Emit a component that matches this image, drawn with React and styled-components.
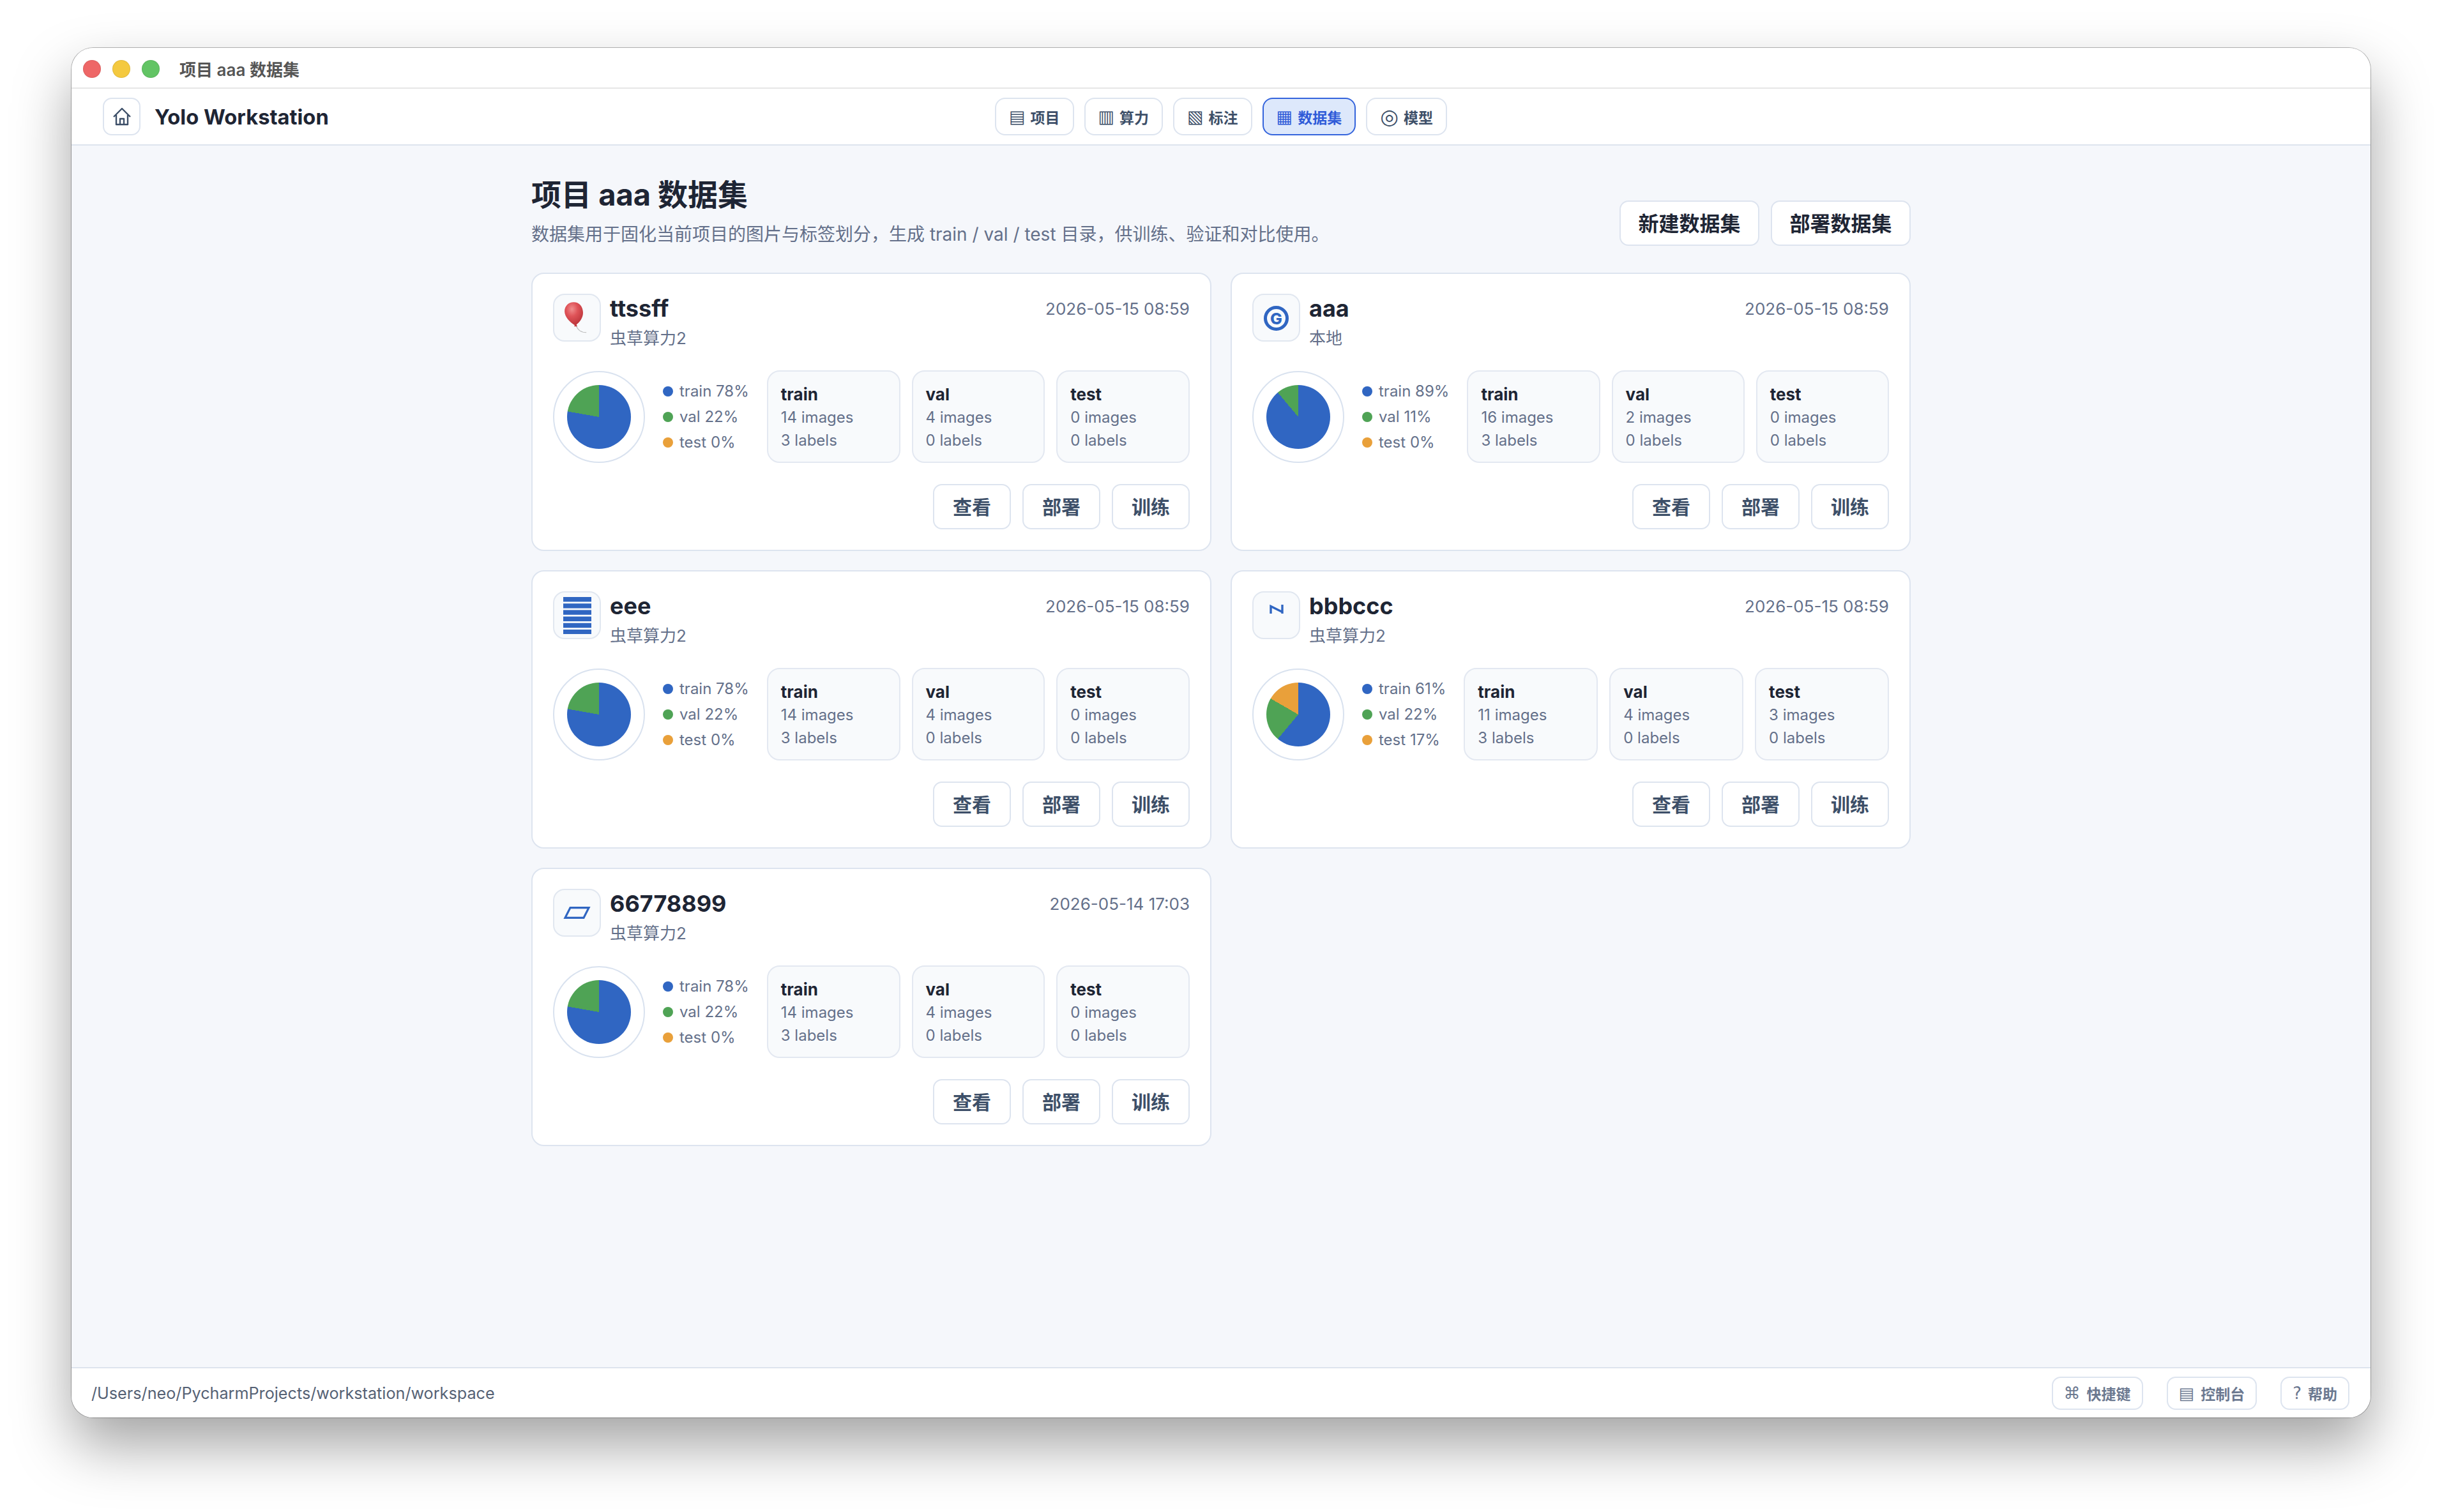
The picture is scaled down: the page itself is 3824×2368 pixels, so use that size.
import React from 'react'
import styled, { createGlobalStyle } from 'styled-components'

const FONT = `Inter, 'Noto Sans CJK SC', 'DejaVu Sans', sans-serif`
const BLUE = '#3066c2'
const GREEN = '#4fa355'
const ORANGE = '#e9a03a'

const GlobalStyle = createGlobalStyle`
  html, body {
    margin: 0;
    background: #fff;
  }
  body {
    font-family: ${FONT};
    -webkit-font-smoothing: antialiased;
  }
  * {
    box-sizing: border-box;
  }
`

const Stage = styled.div`
  width: 3824px;
  height: 2368px;
  padding: 75px 112px 148px;
  overflow: hidden;
`

const Window = styled.div`
  display: flex;
  flex-direction: column;
  height: 100%;
  border-radius: 34px;
  overflow: hidden;
  background: #f5f7fb;
  box-shadow: 0 0 0 1px rgba(0, 0, 0, 0.28), 0 44px 90px rgba(0, 0, 0, 0.36);
`

const TitleBar = styled.div`
  display: flex;
  align-items: center;
  height: 64px;
  padding: 3px 0 0 18px;
  background: #fff;
  border-bottom: 2px solid #e6e6e6;
`

const Light = styled.span`
  width: 28px;
  height: 28px;
  margin-right: 18px;
  border-radius: 50%;
  background: ${(p) => p.$color};
  border: 1px solid rgba(0, 0, 0, 0.08);
`

const WindowTitle = styled.span`
  margin-left: 13px;
  font-size: 26px;
  font-weight: 600;
  color: #555;
`

const Header = styled.header`
  display: grid;
  grid-template-columns: 1fr auto 1fr;
  align-items: center;
  height: 89px;
  padding: 0 49px;
  background: #fff;
  border-bottom: 2px solid #dde4ee;
`

const Brand = styled.div`
  display: flex;
  align-items: center;
  gap: 22px;
`

const HomeButton = styled.div`
  display: flex;
  align-items: center;
  justify-content: center;
  width: 59px;
  height: 59px;
  border: 2px solid #dde4ef;
  border-radius: 14px;
  color: #3d4f68;
`

const BrandName = styled.span`
  font-size: 32.7px;
  font-weight: 700;
  color: #1e2534;
`

const Nav = styled.nav`
  display: flex;
  gap: 16px;
`

const NavItem = styled.div`
  display: flex;
  align-items: center;
  gap: 8px;
  height: 59px;
  padding: 0 20px;
  border: 2px solid ${(p) => (p.$active ? '#3464dc' : '#dde4ef')};
  border-radius: 16px;
  background: ${(p) => (p.$active ? '#dde8fb' : '#fff')};
  color: ${(p) => (p.$active ? '#2f5bd8' : '#3d4f68')};
  font-size: 23px;
  font-weight: 600;
`

const Glyph = styled.span`
  font-family: 'DejaVu Sans', sans-serif;
  font-weight: 400;
  font-size: ${(p) => p.$size || 27}px;
  line-height: 1;
`

const Main = styled.main`
  flex: 1;
  width: 2160px;
  margin: 0 auto;
  padding-top: 47px;
`

const PageHead = styled.div`
  display: flex;
  align-items: flex-end;
  justify-content: space-between;
  margin-bottom: 42px;
`

const PageTitle = styled.h1`
  margin: 0 0 14px;
  font-size: 47px;
  line-height: 60px;
  font-weight: 700;
  color: #1e2534;
`

const PageSub = styled.p`
  margin: 0;
  font-size: 28px;
  line-height: 36px;
  color: #64708a;
`

const HeadActions = styled.div`
  display: flex;
  gap: 18px;
`

const Button = styled.div`
  display: flex;
  align-items: center;
  justify-content: center;
  height: 71px;
  padding: 0 ${(p) => (p.$primary ? 27.5 : 29)}px 3px;
  border: 2px solid #dde4ef;
  border-radius: 14px;
  background: #fff;
  color: ${(p) => (p.$primary ? '#1e2534' : '#3d4f68')};
  font-size: ${(p) => (p.$primary ? 32 : 30)}px;
  font-weight: 700;
`

const CardGrid = styled.div`
  display: grid;
  grid-template-columns: repeat(2, 1fr);
  gap: 30px;
`

const Card = styled.article`
  height: 436px;
  padding: 31px 32px 32px;
  border: 2px solid #dde4ef;
  border-radius: 20px;
  background: #fff;
`

const CardTop = styled.div`
  display: flex;
  justify-content: space-between;
  align-items: flex-start;
  height: 120px;
`

const CardIdentity = styled.div`
  display: flex;
  gap: 14px;
`

const IconBox = styled.div`
  display: flex;
  align-items: center;
  justify-content: center;
  width: 75px;
  height: 75px;
  border: 2px solid #e1e7f0;
  border-radius: 18px;
  background: #f8fafc;
  color: ${BLUE};
  overflow: hidden;
`

const NIconBox = styled(IconBox)`
  align-items: flex-start;
  padding-top: 19px;
`

const CardName = styled.div`
  margin-top: 2px;
  font-size: 36px;
  line-height: 42px;
  font-weight: 700;
  color: #1e2534;
`

const CardSub = styled.div`
  margin-top: 8px;
  font-size: 26px;
  line-height: 36px;
  color: #64708a;
`

const CardDate = styled.div`
  margin-top: 6px;
  font-size: 26px;
  line-height: 36px;
  color: #64708a;
`

const CardBody = styled.div`
  display: flex;
  align-items: center;
  gap: 28px;
  height: 145px;
`

const PieRing = styled.div`
  display: flex;
  align-items: center;
  justify-content: center;
  flex: none;
  width: 144px;
  height: 144px;
  border: 2px solid #d9e2ef;
  border-radius: 50%;
  background: #fff;
`

const PieDisc = styled.div`
  width: 100px;
  height: 100px;
  border-radius: 50%;
`

const Legend = styled.div`
  display: flex;
  flex-direction: column;
  flex: none;
  margin-top: 1px;
`

const LegendRow = styled.div`
  display: flex;
  align-items: center;
  gap: 10px;
  font-size: 24px;
  line-height: 40px;
  color: #64708a;
`

const Dot = styled.span`
  width: 16px;
  height: 16px;
  border-radius: 50%;
  background: ${(p) => p.$color};
`

const Stats = styled.div`
  display: grid;
  grid-template-columns: repeat(3, 1fr);
  gap: 18px;
  flex: 1;
`

const StatBox = styled.div`
  height: 145px;
  padding: 17px 20px 0;
  border: 2px solid #e3e8f1;
  border-radius: 20px;
  background: #f8fafc;
  font-size: 24px;
  line-height: 36px;
  color: #64708a;
`

const StatName = styled.div`
  font-size: 26px;
  line-height: 37px;
  font-weight: 700;
  color: #1e2534;
`

const CardActions = styled.div`
  display: flex;
  justify-content: flex-end;
  gap: 18px;
  margin-top: 33px;
`

const Footer = styled.footer`
  display: flex;
  align-items: center;
  justify-content: space-between;
  height: 79px;
  padding: 0 33px 0 31px;
  background: #fff;
  border-top: 2px solid #dde4ee;
`

const FooterPath = styled.span`
  font-size: 25.2px;
  color: #566275;
`

const FooterActions = styled.div`
  display: flex;
  gap: 37px;
`

const FooterButton = styled.div`
  display: flex;
  align-items: center;
  gap: 10px;
  height: 52px;
  padding: 0 17px;
  border: 2px solid #dde4ef;
  border-radius: 14px;
  color: #6b7890;
  font-size: 23px;
  font-weight: 600;
`

const RingG = styled.span`
  display: flex;
  align-items: center;
  justify-content: center;
  width: 39px;
  height: 39px;
  margin-top: 2px;
  border: 5px solid ${BLUE};
  border-radius: 50%;
  font-size: 25px;
  font-weight: 800;
`

const HomeIcon = () => (
  <svg width="30" height="30" viewBox="0 0 30 30" fill="none" stroke="currentColor" strokeWidth="2.4" strokeLinejoin="round">
    <path d="M2 15 15 2l13 13" />
    <path d="M6 12v15h18V12" />
    <path d="M12 27v-9h6v9" />
  </svg>
)

const BalloonIcon = () => (
  <svg width="75" height="75" viewBox="0 0 75 75" fill="none">
    <defs>
      <radialGradient id="balloon" cx="0.4" cy="0.3" r="0.7">
        <stop offset="0" stopColor="#f08e8e" />
        <stop offset="0.45" stopColor="#df5358" />
        <stop offset="1" stopColor="#bd363c" />
      </radialGradient>
    </defs>
    <path d="M35 49c2 4 3 7 7 10 3 2 7 3 11 3" stroke="#b8b8b8" strokeWidth="1.2" />
    <path d="M32 12c-8.500 0-15 6.500-15 15 0 9.500 9 18 16 22.500 1 .5 2 .5 3 0 6.500-5 12-12.500 11.500-21C47 18.500 41 12 32 12Z" fill="url(#balloon)" />
    <path d="M33 52h5l-1.500-3.500h-2.500Z" fill="#c23d42" />
  </svg>
)

const HexagramIcon = () => (
  <svg width="44" height="58" viewBox="0 0 44 58" fill={BLUE}>
    {[0, 10.2, 20.4, 30.6, 40.8, 51].map((y) => (
      <rect key={y} x="0" y={y} width="44" height="7.400" />
    ))}
  </svg>
)

const WideNIcon = () => (
  <svg width="22" height="14" viewBox="0 0 22 14" fill="none" stroke={BLUE} strokeWidth="3.400">
    <path d="M2 14V2.500L20 11.500M20 0v14" />
  </svg>
)

const ParallelogramIcon = () => (
  <svg width="43" height="19" viewBox="0 0 43 19" fill="none" stroke={BLUE} strokeWidth="3.200">
    <path d="M11 1.600h29L32 17.400H3Z" />
  </svg>
)

const cardIcons = {
  balloon: <BalloonIcon />,
  ring: <RingG>G</RingG>,
  hexagram: <HexagramIcon />,
  wideN: <WideNIcon />,
  parallelogram: <ParallelogramIcon />,
}

const navItems = [
  { glyph: '▤', label: '项目' },
  { glyph: '▥', label: '算力' },
  { glyph: '▧', label: '标注' },
  { glyph: '▦', label: '数据集', active: true },
  { glyph: '◎', label: '模型', size: 33 },
]

const datasets = [
  { name: 'ttssff', icon: 'balloon', host: '虫草算力2', date: '2026-05-15 08:59', train: [14, 3], val: [4, 0], test: [0, 0], pct: [78, 22, 0] },
  { name: 'aaa', icon: 'ring', host: '本地', date: '2026-05-15 08:59', train: [16, 3], val: [2, 0], test: [0, 0], pct: [89, 11, 0] },
  { name: 'eee', icon: 'hexagram', host: '虫草算力2', date: '2026-05-15 08:59', train: [14, 3], val: [4, 0], test: [0, 0], pct: [78, 22, 0] },
  { name: 'bbbccc', icon: 'wideN', host: '虫草算力2', date: '2026-05-15 08:59', train: [11, 3], val: [4, 0], test: [3, 0], pct: [61, 22, 17] },
  { name: '66778899', icon: 'parallelogram', host: '虫草算力2', date: '2026-05-14 17:03', train: [14, 3], val: [4, 0], test: [0, 0], pct: [78, 22, 0] },
]

const pieFill = (d) => {
  const total = d.train[0] + d.val[0] + d.test[0]
  const a = (d.train[0] / total) * 360
  const b = a + (d.val[0] / total) * 360
  return `conic-gradient(${BLUE} 0 ${a}deg, ${GREEN} ${a}deg ${b}deg, ${ORANGE} ${b}deg 360deg)`
}

const DatasetCard = ({ data }) => {
  const Box = data.icon === 'wideN' ? NIconBox : IconBox
  return (
    <Card>
      <CardTop>
        <CardIdentity>
          <Box>{cardIcons[data.icon]}</Box>
          <div>
            <CardName>{data.name}</CardName>
            <CardSub>{data.host}</CardSub>
          </div>
        </CardIdentity>
        <CardDate>{data.date}</CardDate>
      </CardTop>
      <CardBody>
        <PieRing>
          <PieDisc style={{ background: pieFill(data) }} />
        </PieRing>
        <Legend>
          <LegendRow><Dot $color={BLUE} />train {data.pct[0]}%</LegendRow>
          <LegendRow><Dot $color={GREEN} />val {data.pct[1]}%</LegendRow>
          <LegendRow><Dot $color={ORANGE} />test {data.pct[2]}%</LegendRow>
        </Legend>
        <Stats>
          {['train', 'val', 'test'].map((key) => (
            <StatBox key={key}>
              <StatName>{key}</StatName>
              <div>{data[key][0]} images</div>
              <div>{data[key][1]} labels</div>
            </StatBox>
          ))}
        </Stats>
      </CardBody>
      <CardActions>
        <Button>查看</Button>
        <Button>部署</Button>
        <Button>训练</Button>
      </CardActions>
    </Card>
  )
}

const App = () => (
  <Stage>
    <GlobalStyle />
    <Window>
      <TitleBar>
        <Light $color="#ee6767" />
        <Light $color="#f4c93f" />
        <Light $color="#62c464" />
        <WindowTitle>项目 aaa 数据集</WindowTitle>
      </TitleBar>
      <Header>
        <Brand>
          <HomeButton><HomeIcon /></HomeButton>
          <BrandName>Yolo Workstation</BrandName>
        </Brand>
        <Nav>
          {navItems.map((item) => (
            <NavItem key={item.label} $active={item.active}>
              <Glyph $size={item.size}>{item.glyph}</Glyph>
              {item.label}
            </NavItem>
          ))}
        </Nav>
        <div />
      </Header>
      <Main>
        <PageHead>
          <div>
            <PageTitle>项目 aaa 数据集</PageTitle>
            <PageSub>数据集用于固化当前项目的图片与标签划分，生成 train / val / test 目录，供训练、验证和对比使用。</PageSub>
          </div>
          <HeadActions>
            <Button $primary>新建数据集</Button>
            <Button $primary>部署数据集</Button>
          </HeadActions>
        </PageHead>
        <CardGrid>
          {datasets.map((d) => (
            <DatasetCard key={d.name} data={d} />
          ))}
        </CardGrid>
      </Main>
      <Footer>
        <FooterPath>/Users/neo/PycharmProjects/workstation/workspace</FooterPath>
        <FooterActions>
          <FooterButton><Glyph $size={26}>⌘</Glyph>快捷键</FooterButton>
          <FooterButton><Glyph $size={26}>▤</Glyph>控制台</FooterButton>
          <FooterButton><Glyph $size={26}>?</Glyph>帮助</FooterButton>
        </FooterActions>
      </Footer>
    </Window>
  </Stage>
)

export default App
